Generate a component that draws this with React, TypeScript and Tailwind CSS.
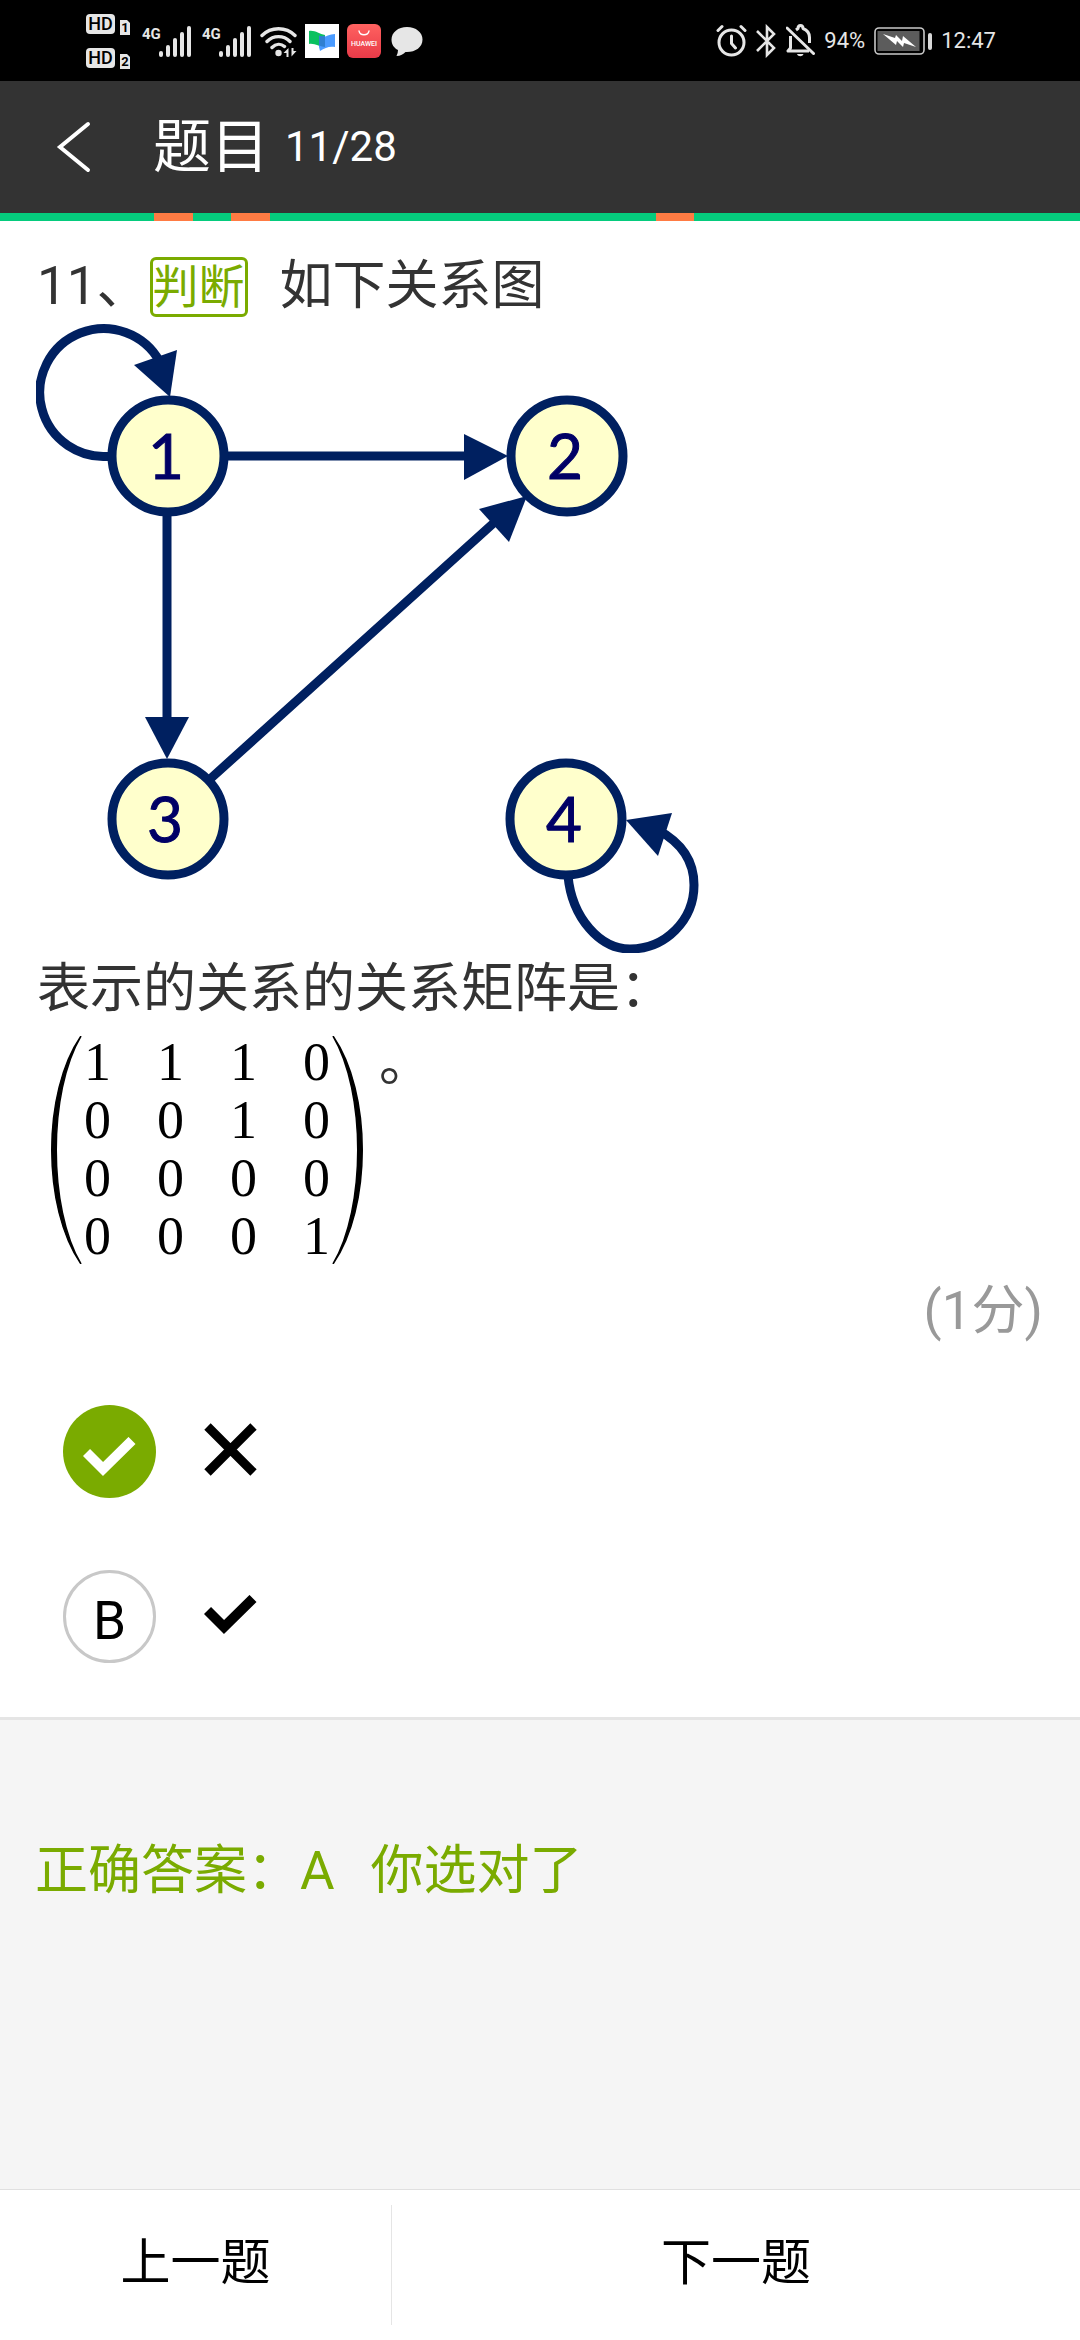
import { useState } from "react";

const TOTAL = 28;
const WRONG = [5, 7, 18];
const MATRIX = [
  [1, 1, 1, 0],
  [0, 0, 1, 0],
  [0, 0, 0, 0],
  [0, 0, 0, 1],
];

function HdIcon() {
  return (
    <svg width="46" height="56" viewBox="0 0 46 56" className="shrink-0" fontFamily="Roboto" fontWeight="700" fill="#000">
      {[0, 34].map((y, i) => (
        <g key={y}>
          <rect x="0" y={y + 1} width="29" height="20" rx="4" fill="#e6e6e6" />
          <text x="14.5" y={y + 17} fontSize="18" fontWeight="500" textAnchor="middle">HD</text>
          <path d={`M34 ${y + 7}h7l3 3v12h-10z`} fill="#e6e6e6" />
          <text x="39" y={y + 19} fontSize="13" textAnchor="middle">{i + 1}</text>
        </g>
      ))}
    </svg>
  );
}

function SignalIcon() {
  return (
    <svg width="50" height="34" viewBox="0 0 50 34" className="shrink-0" fill="#e6e6e6">
      <text x="0" y="15" fontSize="15" fontWeight="700" fontFamily="Roboto, sans-serif">4G</text>
      <rect x="17" y="27" width="4" height="6" rx="2" />
      <rect x="24" y="21" width="4" height="12" rx="2" />
      <rect x="31" y="14" width="4" height="19" rx="2" />
      <rect x="38" y="8" width="4" height="25" rx="2" />
      <rect x="45" y="2" width="4" height="31" rx="2" />
    </svg>
  );
}

function WifiIcon() {
  return (
    <svg width="37" height="34" viewBox="0 0 37 34" className="shrink-0" fill="none" stroke="#e6e6e6" strokeWidth="3.4" strokeLinecap="round">
      <path d="M2 11.500C11 2.500 26 2.500 35 11.500M7 17.500C13.500 11 23.500 11 30 17.500M12 23.500C16 19.500 21 19.500 24.500 22.500" />
      <circle cx="18.500" cy="29" r="3.200" fill="#e6e6e6" stroke="none" />
      <path d="M23.500 29l5-5v9h-2v-4zM36.500 27l-5 5.500V24h2v3z" fill="#e6e6e6" stroke="none" />
    </svg>
  );
}

function MeetingIcon() {
  return (
    <svg width="34" height="34" viewBox="0 0 34 34" className="shrink-0">
      <rect width="34" height="34" fill="#fff" />
      <path d="M4 7c6-1 10 3 16 4v12c-6 0-10-4-16-3z" fill="#0ac15f" />
      <path d="M14 13c6 1 10-3 16-3v13c-6-1-10 1-15 4l-1-4z" fill="#4a9bff" />
      <path d="M14 11.500c2 1 4 1 6 0V23c-2 0-4-1-6-1.500z" fill="#2f7fd0" />
    </svg>
  );
}

function HuaweiIcon() {
  return (
    <svg width="34" height="34" viewBox="0 0 34 34" className="shrink-0">
      <defs>
        <linearGradient id="hw" x1="0" y1="0" x2="0" y2="1">
          <stop offset="0" stopColor="#ff6260" />
          <stop offset="1" stopColor="#e83a48" />
        </linearGradient>
      </defs>
      <rect width="34" height="34" rx="6" fill="url(#hw)" />
      <path d="M12 7c1 5 9 5 10 0" fill="none" stroke="#fff" strokeWidth="1.300" strokeLinecap="round" />
      <text x="17" y="22" fontSize="7" fontWeight="500" fontFamily="Roboto" fill="#fff" textAnchor="middle">HUAWEI</text>
    </svg>
  );
}

function BubbleIcon() {
  return (
    <svg width="32" height="34" viewBox="0 0 32 34" className="ml-0.5 shrink-0" fill="#e6e6e6">
      <path d="M16 3C7 3 .500 8.500.500 15.500c0 5 2.500 8.500 6.500 10.500 0 2-.500 4-1.500 6 4 0 7-2 9-4 9.500.500 17-4.500 17-12.500C31.500 8.500 25 3 16 3z" />
    </svg>
  );
}

function AlarmIcon() {
  return (
    <svg width="31" height="34" viewBox="0 0 31 34" className="shrink-0" fill="none" stroke="#e6e6e6" strokeWidth="3" strokeLinecap="round" strokeLinejoin="round">
      <circle cx="15.500" cy="18.500" r="12.500" />
      <path d="M15.500 12v7.500l4 4.500M2 6.500l4-4M29 6.500l-4-4" />
    </svg>
  );
}

function BluetoothIcon() {
  return (
    <svg width="21" height="34" viewBox="0 0 21 34" className="shrink-0" fill="none" stroke="#e6e6e6" strokeWidth="2.600">
      <path d="M1 7l17 17-7 7V3l7 7L1 27" />
    </svg>
  );
}

function BellOffIcon() {
  return (
    <svg width="29" height="34" viewBox="0 0 29 34" className="shrink-0" fill="none" stroke="#e6e6e6" strokeWidth="3" strokeLinejoin="round">
      <path d="M10 6l2-1.500c0-4 5-4 5 0 4 1.500 6.500 4.500 6.500 9V19M4.500 12v12L2 27h21" />
      <path d="M1 4l26.500 25.500" strokeLinecap="round" />
      <path d="M11 30h6.500c-1 3-5.500 3-6.500 0z" fill="#e6e6e6" stroke="none" />
    </svg>
  );
}

function BatteryIcon() {
  return (
    <svg width="58" height="34" viewBox="0 0 58 34" className="shrink-0">
      <rect x="1" y="4" width="49" height="26" rx="4" fill="none" stroke="#c8c8c8" strokeWidth="1.600" />
      <rect x="3.500" y="7" width="42" height="20" fill="#5c5c5c" />
      <path d="M9 10l12 4 1-3 6 6 1-5 13 11-12-4-1 4-6-6-1 4z" fill="#fff" />
      <rect x="54" y="9" width="4" height="17" rx="2" fill="#d8d8d8" />
    </svg>
  );
}

function StatusBar() {
  return (
    <div className="flex h-[81px] items-center justify-between bg-black pr-[84px] pl-[86px] text-[22px] text-[#e6e6e6]">
      <div className="flex items-center gap-2">
        <div className="flex items-center gap-[10px]">
          <HdIcon />
          <SignalIcon />
          <SignalIcon />
        </div>
        <WifiIcon />
        <MeetingIcon />
        <HuaweiIcon />
        <BubbleIcon />
      </div>
      <div className="flex items-center gap-[9px]">
        <AlarmIcon />
        <BluetoothIcon />
        <BellOffIcon />
        <span>94%</span>
        <BatteryIcon />
        <span>12:47</span>
      </div>
    </div>
  );
}

function RelationGraph() {
  const nodes = [
    { n: 1, x: 168, y: 456, tx: 166 },
    { n: 2, x: 567, y: 456, tx: 565 },
    { n: 3, x: 168, y: 819, tx: 165 },
    { n: 4, x: 566, y: 819, tx: 564 },
  ];
  return (
    <svg width="664" height="630" viewBox="36 323 664 630" className="-ml-px block" role="img" aria-label="关系图">
      <g fill="none" stroke="#002060" strokeWidth="9">
        <path d="M112 456A64 64 0 1 1 160 362" />
        <path d="M568 876C572 918 600 949 630 949A64 64 0 0 0 694 885C694 862 682 843 658 830" />
        <path d="M225 456H468M167 515V722M209 780L497 520" />
      </g>
      <g fill="#002060">
        <path d="M170 397L134 365L177 350z" />
        <path d="M508 456L464 434V480z" />
        <path d="M167 759L145 717H189z" />
        <path d="M527 496L479 509L509 542z" />
        <path d="M626 820L672 813L658 856z" />
      </g>
      {nodes.map((d) => (
        <g key={d.n}>
          <circle cx={d.x} cy={d.y} r="56" fill="#ffffcc" stroke="#002060" strokeWidth="9" />
          <text x={d.tx} y={d.y + 23} fontSize="62" fontFamily="Lato, sans-serif" fill="#000066" stroke="#000066" strokeWidth="1" textAnchor="middle">{d.n}</text>
        </g>
      ))}
    </svg>
  );
}

function Matrix() {
  return (
    <div className="flex items-start text-black">
      <svg width="31" height="228" viewBox="0 0 31 228" aria-hidden="true">
        <path d="M30 0C-9 56-9 172 30 228C-3 172-3 56 30 0z" stroke="#000" strokeWidth="1.500" />
      </svg>
      <table className="mx-[2px] -mt-[3px] border-collapse font-['Liberation_Serif',serif] text-[54px] leading-[58px]">
        <tbody>
          {MATRIX.map((row, r) => (
            <tr key={r}>
              {row.map((v, c) => (
                <td key={c} className="p-0 pr-[46px] last:pr-0">{v}</td>
              ))}
            </tr>
          ))}
        </tbody>
      </table>
      <svg width="31" height="228" viewBox="0 0 31 228" aria-hidden="true">
        <path d="M1 0C40 56 40 172 1 228C34 172 34 56 1 0z" stroke="#000" strokeWidth="1.500" />
      </svg>
    </div>
  );
}

function Tick() {
  return (
    <svg width="53" height="40" viewBox="0 0 53 40" aria-hidden="true">
      <path d="M3.500 15.500L20 32L49 3.500" fill="none" stroke="currentColor" strokeWidth="10" />
    </svg>
  );
}

function Cross() {
  return (
    <svg width="53" height="53" viewBox="0 0 53 53" aria-hidden="true">
      <path d="M3.500 3.500L49.500 49.500M49.500 3.500L3.500 49.500" fill="none" stroke="currentColor" strokeWidth="9" />
    </svg>
  );
}

export default function App() {
  const [picked, setPicked] = useState("A");
  const options = [
    { id: "A", label: "错误", mark: <Cross /> },
    { id: "B", label: "正确", mark: <Tick /> },
  ];
  return (
    <div className="flex min-h-screen flex-col bg-white font-[Roboto,'Noto_Sans_CJK_SC',sans-serif] text-[53px] text-[#333]">
      <StatusBar />
      <header className="flex h-[132px] items-center bg-[#333] pl-[56px] text-white">
        <button type="button" aria-label="返回" className="mr-[61px]">
          <svg width="36" height="54" viewBox="0 0 36 54" fill="none" stroke="#fff" strokeWidth="4" strokeLinecap="round">
            <path d="M32 4L4 27L32 50" />
          </svg>
        </button>
        <h1 className="flex items-center gap-4 text-[42px] leading-[60px]">
          <span className="text-[58px]">题目</span>
          <span>11/28</span>
        </h1>
      </header>
      <div className="grid h-2 grid-cols-28">
        {Array.from({ length: TOTAL }, (_, i) => (
          <span key={i} className={WRONG.includes(i + 1) ? "bg-[#ff7b43]" : "bg-[#05cb7d]"} />
        ))}
      </div>

      <main className="px-[37px] pt-[30px]">
        <div className="flex h-[72px] items-center">
          <span>11、</span>
          <span className="flex h-[60px] items-center rounded-md border-[3px] border-[#7aab00] text-[46px] leading-none text-[#7aab00]">判断</span>
          <span className="ml-8">如下关系图</span>
        </div>
        <RelationGraph />
        <p className="leading-[72px]">表示的关系的关系矩阵是：</p>
        <div className="flex pt-[11px] pl-[14px]">
          <Matrix />
          <span className="ml-4 leading-[54px]">。</span>
        </div>
        <p className="pt-[10px] text-right leading-[72px] text-[#999]">(1分)</p>
        <fieldset className="flex flex-col gap-[72px] pt-[58px] pb-[54px] pl-[26px] text-black">
          {options.map((o) => (
            <label key={o.id} className="flex h-[93px] items-center gap-12">
              <input
                type="radio"
                name="answer"
                aria-label={o.label}
                checked={picked === o.id}
                onChange={() => setPicked(o.id)}
                className="sr-only"
              />
              {picked === o.id ? (
                <span className="flex size-[93px] items-center justify-center rounded-full bg-[#7aab00] pt-[10px] text-white">
                  <Tick />
                </span>
              ) : (
                <span className="flex size-[93px] items-center justify-center rounded-full border-[3px] border-[#c8c8c8] pt-[10px] leading-none">
                  {o.id}
                </span>
              )}
              <span className="pb-1">{o.mark}</span>
            </label>
          ))}
        </fieldset>
      </main>

      <section className="flex-1 border-t-[3px] border-[#e5e5e5] bg-[#f5f5f5] px-[35px] pt-[115px]">
        <p className="flex gap-9 leading-[72px] text-[#7aab00]">
          <span>正确答案：A</span>
          <span>你选对了</span>
        </p>
      </section>

      <nav className="flex h-[151px] items-center border-t border-[#e0e0e0] bg-white text-[50px] text-black">
        <button type="button" className="h-[120px] w-[391px] pb-1">上一题</button>
        <button type="button" className="h-[120px] flex-1 border-l border-[#e5e5e5] pb-1">下一题</button>
      </nav>
    </div>
  );
}
